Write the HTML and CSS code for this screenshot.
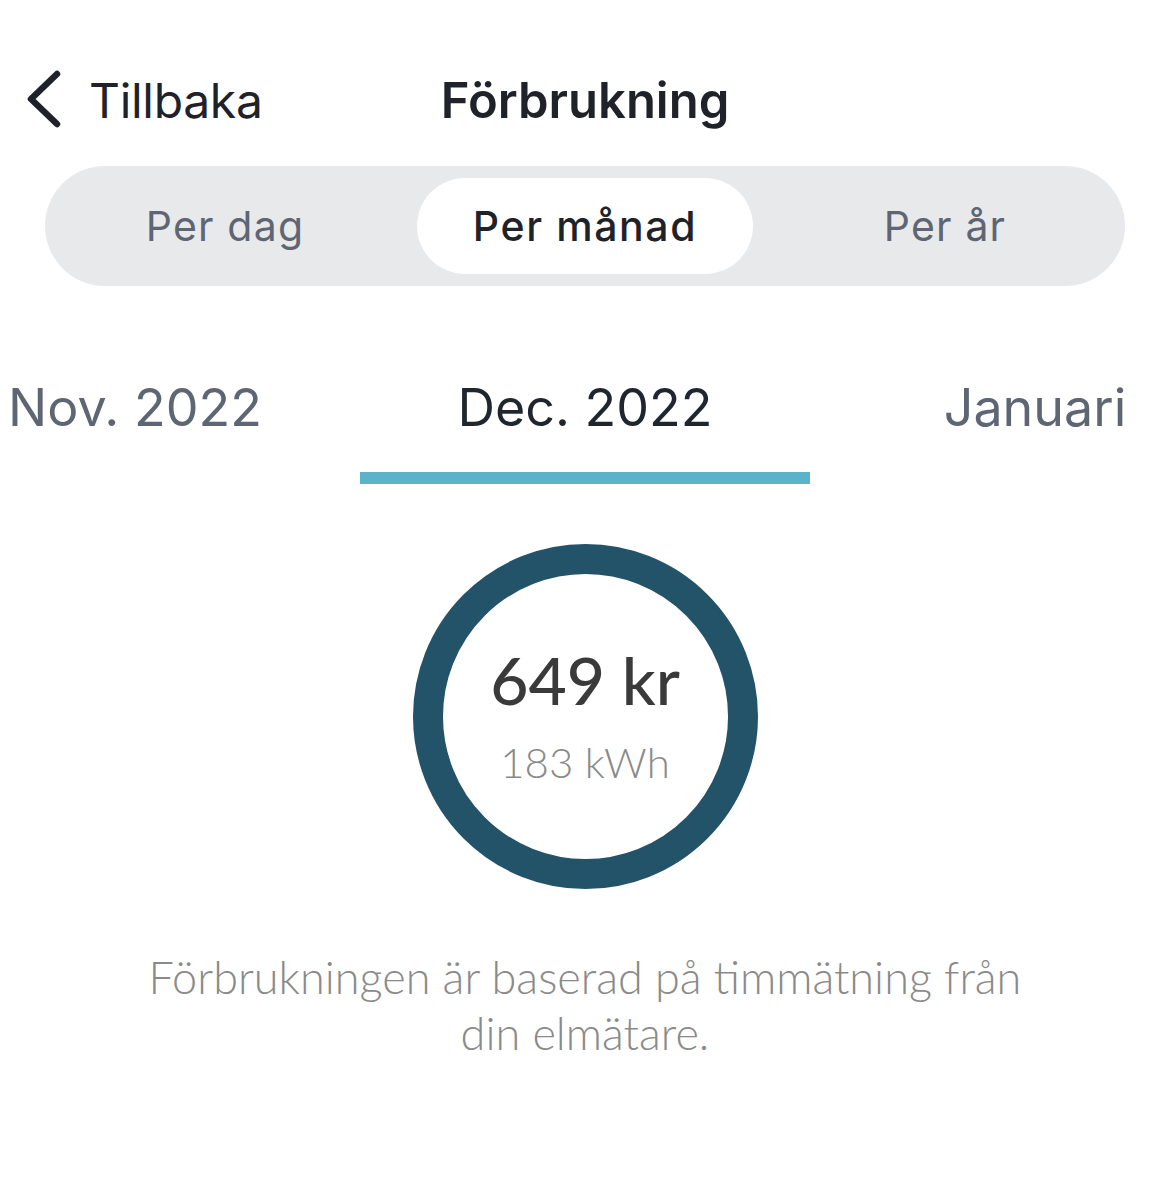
FILE: index.html
```html
<!DOCTYPE html>
<html lang="sv">
<head>
<meta charset="utf-8">
<title>Förbrukning</title>
<link rel="stylesheet" href="styles.css">
</head>
<body>
<div class="page">
  <header class="topbar">
    <a class="back">
      <svg class="chev" width="40" height="64" viewBox="0 0 40 64">
        <path d="M32 6 L6 31 L32 56" fill="none" stroke="#1f2329" stroke-width="6.5" stroke-linecap="round" stroke-linejoin="round"/>
      </svg>
      <span class="back-label">Tillbaka</span>
    </a>
    <h1 class="title">Förbrukning</h1>
    <span></span>
  </header>

  <nav class="segmented">
    <div class="seg">Per dag</div>
    <div class="seg active">Per månad</div>
    <div class="seg">Per år</div>
  </nav>

  <div class="months">
    <div class="months-track">
      <div class="month">Nov. 2022</div>
      <div class="month current">Dec. 2022</div>
      <div class="month">Januari</div>
    </div>
  </div>

  <section class="summary">
    <div class="ring">
      <div class="amount">649 kr</div>
      <div class="energy">183 kWh</div>
    </div>
  </section>

  <p class="note">Förbrukningen är baserad på timmätning från<br>din elmätare.</p>
</div>
</body>
</html>
```

FILE: styles.css
```css
html, body {
  margin: 0;
  padding: 0;
  background: #ffffff;
}

.page {
  width: 1170px;
  overflow: hidden;
  font-family: Inter, "Noto Sans", sans-serif;
}

.topbar {
  display: grid;
  grid-template-columns: 1fr auto 1fr;
  align-items: center;
  height: 100px;
  margin-top: 50px;
}

.back {
  display: flex;
  align-items: center;
  padding-left: 25px;
  color: #1f2329;
}

.chev {
  display: block;
}

.back-label {
  margin-left: 24px;
  font-size: 48px;
  font-weight: 400;
  letter-spacing: -0.3px;
}

.title {
  margin: 0;
  font-size: 49px;
  font-weight: 600;
  color: #1f2329;
}

.segmented {
  display: grid;
  grid-template-columns: repeat(3, 1fr);
  margin: 16px 45px 0;
  height: 120px;
  padding: 12px 0;
  box-sizing: border-box;
  background: #e8e9eb;
  border-radius: 60px;
}

.seg {
  display: flex;
  align-items: center;
  justify-content: center;
  margin: 0 12px;
  border-radius: 48px;
  font-size: 41px;
  color: #5f6573;
  letter-spacing: 1.2px;
}

.seg.active {
  background: #ffffff;
  color: #1f2329;
  font-weight: 500;
  letter-spacing: 1.6px;
}

.months {
  margin-top: 74px;
}

.months-track {
  display: grid;
  grid-template-columns: repeat(3, 450px);
  margin-left: -90px;
}

.month {
  text-align: center;
  font-size: 52px;
  line-height: 90px;
  height: 90px;
  padding-top: 3px;
  padding-bottom: 19px;
  color: #5f6673;
}

.month.current {
  color: #1f2630;
  border-bottom: 12px solid #5ab3c8;
}

.summary {
  display: flex;
  justify-content: center;
  margin-top: 60px;
}

.ring {
  width: 345px;
  height: 345px;
  box-sizing: border-box;
  border: 30px solid #235368;
  border-radius: 50%;
  display: flex;
  flex-direction: column;
  align-items: center;
  justify-content: center;
  font-family: Lato, "Noto Sans", sans-serif;
}

.amount {
  font-size: 66px;
  font-weight: 500;
  color: #3a3a3a;
  line-height: 76px;
  margin-top: -2px;
}

.energy {
  font-size: 42px;
  font-weight: 300;
  color: #8a8a8a;
  line-height: 56px;
  margin-top: 16px;
}

.note {
  margin: 60px 0 0;
  text-align: center;
  font-family: Lato, "Noto Sans", sans-serif;
  font-weight: 300;
  font-size: 45px;
  line-height: 56px;
  color: #8a8a8a;
}
```
